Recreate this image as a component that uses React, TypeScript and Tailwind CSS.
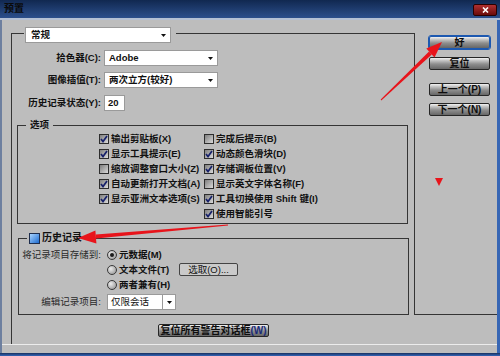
import React from "react";

function Arrow() {
  return (
    <svg width="5" height="3" viewBox="0 0 5 3" className="shrink-0">
      <path d="M0 0H5L2.5 3Z" fill="#111" />
    </svg>
  );
}

function Check({ checked }: { checked: boolean }) {
  return (
    <span className="w-[10px] h-[10px] shrink-0 border border-[#2d2d2d] bg-[linear-gradient(135deg,#7e7e7e,#dadada)] flex items-center justify-center">
      {checked && (
        <svg width="8" height="8" viewBox="0 0 8 8">
          <path d="M1 4 L3 6.5 L7 1" fill="none" stroke="#16206a" strokeWidth="1.7" />
        </svg>
      )}
    </span>
  );
}

function Radio({ on }: { on?: boolean }) {
  return (
    <span className="w-[10px] h-[10px] shrink-0 rounded-full border border-[#3a3a3a] bg-[radial-gradient(circle_at_35%_35%,#ececec,#8a8a8a)] flex items-center justify-center">
      {on && <span className="w-[4px] h-[4px] rounded-full bg-[#1a1a1a]" />}
    </span>
  );
}

function CheckRow({ checked, label }: { checked: boolean; label: string }) {
  return (
    <div className="h-[15px] flex items-center gap-[2px] whitespace-nowrap">
      <Check checked={checked} />
      <span>{label}</span>
    </div>
  );
}

const metal =
  "h-[13px] rounded-[2px] border border-[#262626] bg-[linear-gradient(to_bottom,#f2f2f2_0%,#c6c6c6_22%,#8e8e8e_55%,#666666_100%)] flex items-center justify-center text-[#0d0d0d] text-[10px]";

export default function App() {
  return (
    <div className="relative w-[500px] h-[356px] overflow-hidden bg-[#bdbdbd] font-[family-name:'Liberation_Sans','Noto_Sans_CJK_SC',sans-serif] text-[9.5px] font-bold text-[#111] leading-none">
      {/* title bar */}
      <div className="h-[18px] flex items-center justify-between pl-[4px] pr-[3px] bg-[linear-gradient(to_bottom,#112850,#2c4f8c)]">
        <span className="text-[10px] text-[#0a0a0a]">预置</span>
        <div className="w-[24px] h-[12px] mt-[2px] rounded-[2px] border border-[#2a0000] bg-[linear-gradient(to_bottom,#b03030,#6a0a0a)] flex items-center justify-center">
          <svg width="7" height="6" viewBox="0 0 7 6">
            <path d="M1 0.5 L6 5.5 M6 0.5 L1 5.5" stroke="#ffffff" strokeWidth="1.6" />
          </svg>
        </div>
      </div>
      <div className="h-[2px] bg-[#b4c0d4]" />

      <div className="border-l-2 border-r-[3px] border-l-[#6d7f9f] border-r-[#3766b4]">
        <div className="flex h-[324px]">
          {/* outer panel */}
          <div className="ml-[9px] mt-[13px] w-[404px] h-[311px] border-l border-t border-[#353535] flex flex-col">
            <div className="border-r border-[#353535] flex flex-col">
              {/* legend select */}
              <div className="-mt-[7px] ml-[12px] w-[152px] pl-[1px] bg-[#bdbdbd]">
                <div className="w-[146px] h-[16px] bg-white border border-[#9a9a9a] flex items-center justify-between pl-[5px] pr-[4px]">
                  <span>常规</span>
                  <Arrow />
                </div>
              </div>

              {/* form rows */}
              <div className="mt-[7px] flex items-center">
                <div className="w-[89px] text-right">拾色器(C):</div>
                <div className="ml-[3px] w-[114px] h-[16px] bg-white border border-[#9a9a9a] flex items-center justify-between pl-[4px] pr-[4px]">
                  <span>Adobe</span>
                  <Arrow />
                </div>
              </div>
              <div className="mt-[6px] flex items-center">
                <div className="w-[89px] text-right">图像插值(T):</div>
                <div className="ml-[3px] w-[114px] h-[16px] bg-white border border-[#9a9a9a] flex items-center justify-between pl-[4px] pr-[4px]">
                  <span>两次立方(较好)</span>
                  <Arrow />
                </div>
              </div>
              <div className="mt-[7px] flex items-center">
                <div className="w-[89px] text-right">历史记录状态(Y):</div>
                <div className="ml-[3px] w-[21px] h-[16px] bg-white border border-[#9a9a9a] flex items-center pl-[3px]">
                  <span>20</span>
                </div>
              </div>

              {/* options box */}
              <div className="mt-[14px] ml-[5px] w-[391px] border border-[#353535] pb-[2px] flex flex-col">
                <div className="-mt-[8px] ml-[8px] h-[14px] self-start px-[4px] bg-[#bdbdbd] flex items-center">
                  选项
                </div>
                <div className="-mt-[1px] pl-[81px] flex">
                  <div className="w-[105px] flex flex-col">
                    <CheckRow checked label="输出剪贴板(X)" />
                    <CheckRow checked label="显示工具提示(E)" />
                    <CheckRow checked={false} label="缩放调整窗口大小(Z)" />
                    <CheckRow checked label="自动更新打开文档(A)" />
                    <CheckRow checked label="显示亚洲文本选项(S)" />
                  </div>
                  <div className="flex flex-col">
                    <CheckRow checked={false} label="完成后提示(B)" />
                    <CheckRow checked label="动态颜色滑块(D)" />
                    <CheckRow checked label="存储调板位置(V)" />
                    <CheckRow checked={false} label="显示英文字体名称(F)" />
                    <CheckRow checked label="工具切换使用 Shift 键(I)" />
                    <CheckRow checked label="使用智能引号" />
                  </div>
                </div>
              </div>

              {/* history box */}
              <div className="mt-[14px] ml-[6px] w-[391px] border border-[#353535] pb-[4px] flex flex-col">
                <div className="-mt-[8px] ml-[8px] h-[14px] self-start pl-[2px] pr-[3px] bg-[#bdbdbd] flex items-center gap-[2px]">
                  <span className="w-[11px] h-[11px] border border-[#1d2d4d] bg-[linear-gradient(135deg,#a8d4ff,#1e6cd0)]" />
                  <span className="text-[10px]">历史记录</span>
                </div>
                <div className="mt-[2px] flex">
                  <div className="w-[82px] text-right h-[15px] flex items-center justify-end font-normal text-[#2a2a2a]">
                    将记录项目存储到:
                  </div>
                  <div className="ml-[6px] flex flex-col">
                    <div className="h-[15px] flex items-center gap-[2px]">
                      <Radio on />
                      <span>元数据(M)</span>
                    </div>
                    <div className="h-[15px] flex items-center">
                      <div className="w-[72px] flex items-center gap-[2px]">
                        <Radio />
                        <span>文本文件(T)</span>
                      </div>
                      <div className="w-[59px] h-[13px] rounded-[2px] border border-[#444] bg-[#cacaca] flex items-center justify-center font-normal text-[#111]">
                        选取(O)...
                      </div>
                    </div>
                    <div className="h-[15px] flex items-center gap-[2px]">
                      <Radio />
                      <span>两者兼有(H)</span>
                    </div>
                  </div>
                </div>
                <div className="mt-[2px] flex items-center">
                  <div className="w-[82px] text-right font-normal text-[#2a2a2a]">编辑记录项目:</div>
                  <div className="ml-[6px] w-[69px] h-[16px] bg-white border border-[#9a9a9a] flex items-center">
                    <span className="flex-1 pl-[3px] font-normal">仅限会话</span>
                    <span className="w-[13px] h-full border-l border-[#9a9a9a] flex items-center justify-center">
                      <Arrow />
                    </span>
                  </div>
                </div>
              </div>
            </div>

            {/* reset warnings button */}
            <div className="mt-[9px] ml-[146px] w-[111px]">
              <div className={metal}>
                <span>
                  复位所有警告对话框<span className="text-[#1a2a78]">(W)</span>
                </span>
              </div>
            </div>
          </div>

          {/* right column */}
          <div className="w-[82px] h-[295px] border-b border-[#353535] flex flex-col pl-[14px]">
            <div className={"mt-[16px] w-[61px] " + metal + " !border-[#1c58b0] outline outline-1 outline-[#1c58b0]"}>好</div>
            <div className={"mt-[8px] w-[61px] " + metal}>复位</div>
            <div className={"mt-[13px] w-[61px] " + metal}>上一个(P)</div>
            <div className={"mt-[7px] w-[61px] " + metal}>下一个(N)</div>
          </div>
        </div>
        <div className="h-[1px] bg-[#ececec]" />
        <div className="h-[8px]" />
      </div>
      <div className="h-[3px] bg-[linear-gradient(to_bottom,#17305e,#3466b8)]" />

      {/* red annotations */}
      <svg className="absolute inset-0 pointer-events-none" width="500" height="356" viewBox="0 0 500 356">
        <polygon points="381.3,100.4 380.7,99.6 429.0,51.5 431.8,54.5" fill="#e8141b" />
        <polygon points="442,42 434.5,57.4 426.3,48.6" fill="#e8141b" />
        <polygon points="228.04,225.5 227.96,224.5 95.7,234.4 96.1,238.4" fill="#e8141b" />
        <polygon points="78,238 96.4,243.4 95.4,230.5" fill="#e8141b" />
        <polygon points="435,178 443,178 439,186" fill="#e8141b" />
      </svg>
    </div>
  );
}
